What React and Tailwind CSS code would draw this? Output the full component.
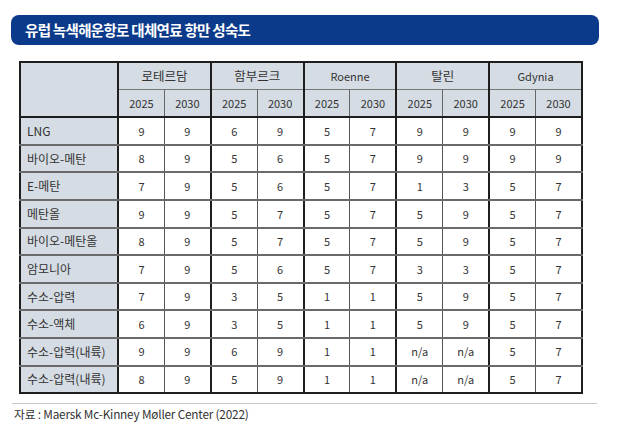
import React from "react";

const groups = ["로테르담", "함부르크", "Roenne", "탈린", "Gdynia"];
const rows = [
  ["LNG", "9", "9", "6", "9", "5", "7", "9", "9", "9", "9"],
  ["바이오-메탄", "8", "9", "5", "6", "5", "7", "9", "9", "9", "9"],
  ["E-메탄", "7", "9", "5", "6", "5", "7", "1", "3", "5", "7"],
  ["메탄올", "9", "9", "5", "7", "5", "7", "5", "9", "5", "7"],
  ["바이오-메탄올", "8", "9", "5", "7", "5", "7", "5", "9", "5", "7"],
  ["암모니아", "7", "9", "5", "6", "5", "7", "3", "3", "5", "7"],
  ["수소-압력", "7", "9", "3", "5", "1", "1", "5", "9", "5", "7"],
  ["수소-액체", "6", "9", "3", "5", "1", "1", "5", "9", "5", "7"],
  ["수소-압력(내륙)", "9", "9", "6", "9", "1", "1", "n/a", "n/a", "5", "7"],
  ["수소-압력(내륙)", "8", "9", "5", "9", "1", "1", "n/a", "n/a", "5", "7"],
];

const font = { fontFamily: '"Noto Sans CJK KR", "Noto Sans", sans-serif' };

export default function App() {
  return (
    <div className="w-[632px] h-[436px] bg-white pt-[15px] overflow-hidden" style={font}>
      <div className="ml-[11px] w-[588px] h-[30px] rounded-[8px] bg-[#0c3a8a] flex items-center pl-[14px]">
        <span className="text-white text-[14.5px] font-bold leading-none tracking-[-0.7px]">
          유럽 녹색해운항로 대체연료 항만 성숙도
        </span>
      </div>
      <table className="ml-[19px] mt-[16px] w-[564px] table-fixed border-collapse border-2 border-[#1e1e1e] text-[#333] text-[11px]">
        <colgroup>
          <col className="w-[98px]" />
          {Array.from({ length: 10 }).map((_, i) => (
            <col key={i} />
          ))}
        </colgroup>
        <thead>
          <tr className="h-[27.6px] bg-[#d5dce4]">
            <th rowSpan={2} className="border-r-2 border-r-[#1e1e1e] border-b-2 border-b-[#1e1e1e]"></th>
            {groups.map((g, i) => (
              <th
                key={g}
                colSpan={2}
                className={`font-normal border-b border-b-[#777] ${i < 4 ? "border-r-2 border-r-[#1e1e1e]" : ""} ${/[A-Za-z]/.test(g) ? "text-[11px]" : "text-[12.5px]"}`}
              >
                {g}
              </th>
            ))}
          </tr>
          <tr className="h-[27.6px] bg-[#d5dce4]">
            {groups.map((g, i) => (
              <React.Fragment key={g}>
                <th className="font-normal text-[11px] border-r border-r-[#666] border-b-2 border-b-[#1e1e1e]">2025</th>
                <th className={`font-normal text-[11px] border-b-2 border-b-[#1e1e1e] ${i < 4 ? "border-r-2 border-r-[#1e1e1e]" : ""}`}>2030</th>
              </React.Fragment>
            ))}
          </tr>
        </thead>
        <tbody>
          {rows.map((r, ri) => (
            <tr key={ri} className="h-[27.6px]">
              <td
                className={`bg-[#d5dce4] pl-[6px] text-[12px] text-left border-r-2 border-r-[#1e1e1e] ${ri < rows.length - 1 ? "border-b-2 border-b-[#6a6a6a]" : ""}`}
              >
                {r[0]}
              </td>
              {r.slice(1).map((v, ci) => (
                <td
                  key={ci}
                  className={`text-center bg-white ${ri < rows.length - 1 ? "border-b-2 border-b-[#6a6a6a]" : ""} ${ci % 2 === 0 ? "border-r border-r-[#555]" : ci < 9 ? "border-r-2 border-r-[#1e1e1e]" : ""}`}
                >
                  {v}
                </td>
              ))}
            </tr>
          ))}
        </tbody>
      </table>
      <div className="ml-[12px] mt-[9px] w-[585px] h-px bg-[#c8c8c8]" />
      <div className="ml-[14px] mt-[3px] text-[11.8px] text-[#333] leading-[14px] tracking-[-0.2px]">
        자료 : Maersk Mc-Kinney Møller Center (2022)
      </div>
    </div>
  );
}
